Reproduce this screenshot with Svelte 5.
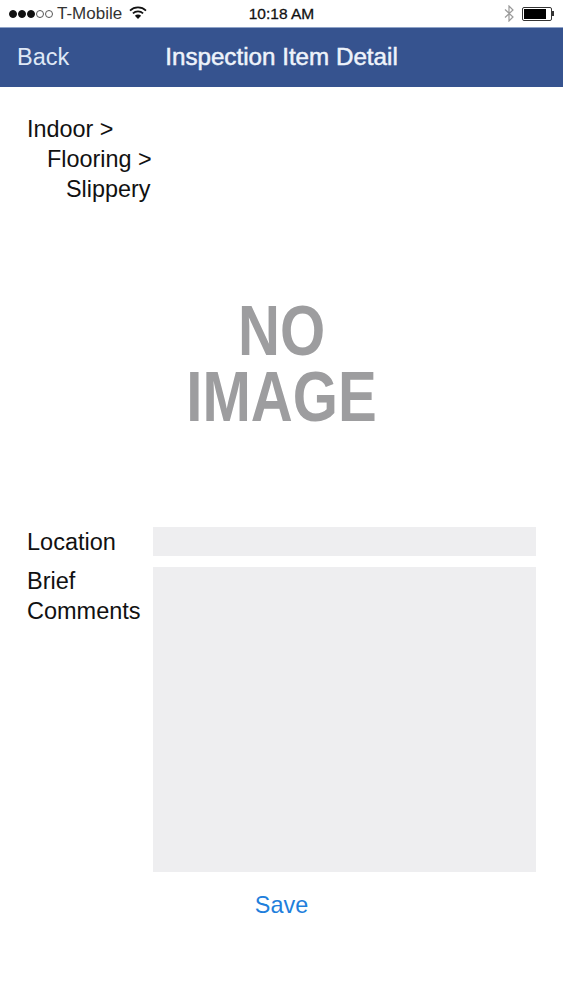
<script>
	let path = [
		{ label: 'Indoor >', cls: 'lvl0' },
		{ label: 'Flooring >', cls: 'lvl1' },
		{ label: 'Slippery', cls: 'lvl2' }
	];
</script>

<main>
	<div class="status">
		<div class="carrier">
			<span class="dots">
				<i class="on"></i><i class="on"></i><i class="on"></i><i></i><i></i>
			</span>
			<span>T-Mobile</span>
			<svg class="wifi" width="18" height="13" viewBox="0 0 18 13">
				<path d="M1 4.6 A11.5 11.5 0 0 1 17 4.6" fill="none" stroke="#111" stroke-width="1.7" />
				<path d="M3.9 7.4 A7.4 7.4 0 0 1 14.1 7.4" fill="none" stroke="#111" stroke-width="1.7" />
				<path d="M9 13 L5.9 9.8 A4.4 4.4 0 0 1 12.1 9.8 Z" fill="#111" />
			</svg>
		</div>
		<div class="time">10:18 AM</div>
		<div class="right">
			<svg width="10" height="17" viewBox="0 0 10 17">
				<path d="M1 4.5 L9 12 L5 16 L5 1 L9 5 L1 12.5" fill="none" stroke="#9a9a9a" stroke-width="1.2" />
			</svg>
			<div class="battery"><div class="charge"></div></div>
			<div class="nub"></div>
		</div>
	</div>

	<header>
		<span class="back">Back</span>
		<h1>Inspection Item Detail</h1>
	</header>

	<section class="crumbs">
		{#each path as item}
			<div class={item.cls}>{item.label}</div>
		{/each}
	</section>

	<div class="noimage">
		<span>NO</span>
		<span>IMAGE</span>
	</div>

	<form>
		<div class="row">
			<label for="loc">Location</label>
			<div id="loc" class="input"></div>
		</div>
		<div class="row">
			<label class="multi" for="com">Brief<br />Comments</label>
			<div id="com" class="input big"></div>
		</div>
		<div class="save">Save</div>
	</form>
</main>

<style>
	:global(body) {
		margin: 0;
		background: #fff;
	}

	main {
		width: 563px;
		height: 1000px;
		overflow: hidden;
		font-family: 'Liberation Sans', Arial, sans-serif;
		color: #111;
	}

	.status {
		height: 27px;
		display: grid;
		grid-template-columns: 1fr auto 1fr;
		align-items: center;
		font-size: 17px;
		color: #333;
	}

	.carrier {
		display: flex;
		align-items: center;
		padding-left: 9px;
	}

	.dots {
		display: flex;
		gap: 1px;
		margin-right: 4px;
	}

	.dots i {
		width: 8px;
		height: 8px;
		box-sizing: border-box;
		border: 1px solid #555;
		border-radius: 50%;
	}

	.dots i.on {
		background: #111;
		border-color: #111;
	}

	.wifi {
		margin-left: 7px;
		margin-bottom: 2px;
	}

	.time {
		font-size: 15.5px;
		color: #111;
		-webkit-text-stroke: 0.3px #111;
	}

	.right {
		display: flex;
		align-items: center;
		justify-content: flex-end;
		padding-right: 9px;
	}

	.battery {
		width: 30px;
		height: 14px;
		margin-left: 8px;
		box-sizing: border-box;
		border: 1px solid #333;
		border-radius: 2px;
		padding: 1px;
	}

	.charge {
		width: 22px;
		height: 100%;
		background: #000;
	}

	.nub {
		width: 2px;
		height: 5px;
		background: #333;
	}

	header {
		height: 60px;
		box-sizing: border-box;
		background: #36538f;
		border-top: 1px solid #8fa3c8;
		display: flex;
		align-items: center;
		justify-content: center;
		position: relative;
		color: #eef3fb;
	}

	.back {
		position: absolute;
		left: 17px;
		font-size: 23.5px;
		color: #dfe8f6;
	}

	h1 {
		margin: -1px 0 0;
		font-size: 24.2px;
		font-weight: 400;
		-webkit-text-stroke: 0.5px #eef3fb;
	}

	.crumbs {
		padding: 27px 0 0 27px;
		font-size: 23.4px;
		line-height: 30px;
	}

	.lvl1 {
		padding-left: 20px;
	}

	.lvl2 {
		padding-left: 39px;
	}

	.noimage {
		height: 130px;
		margin-top: 94px;
		display: flex;
		flex-direction: column;
		align-items: center;
		color: #9d9d9f;
		font-weight: 700;
		font-size: 70px;
		line-height: 66px;
		transform: scaleX(0.83);
	}

	form {
		margin-top: 99px;
		padding: 0 27px;
	}

	.row {
		display: flex;
		margin-bottom: 10px;
		font-size: 23.5px;
		line-height: 30px;
	}

	label {
		width: 126px;
		flex: none;
	}

	.multi {
		margin-top: -1px;
	}

	.input {
		flex: 1;
		height: 29px;
		background: #eeeef0;
	}

	.big {
		height: 305px;
	}

	.save {
		margin-top: 20px;
		text-align: center;
		font-size: 23.4px;
		color: #1f7fdc;
	}
</style>
